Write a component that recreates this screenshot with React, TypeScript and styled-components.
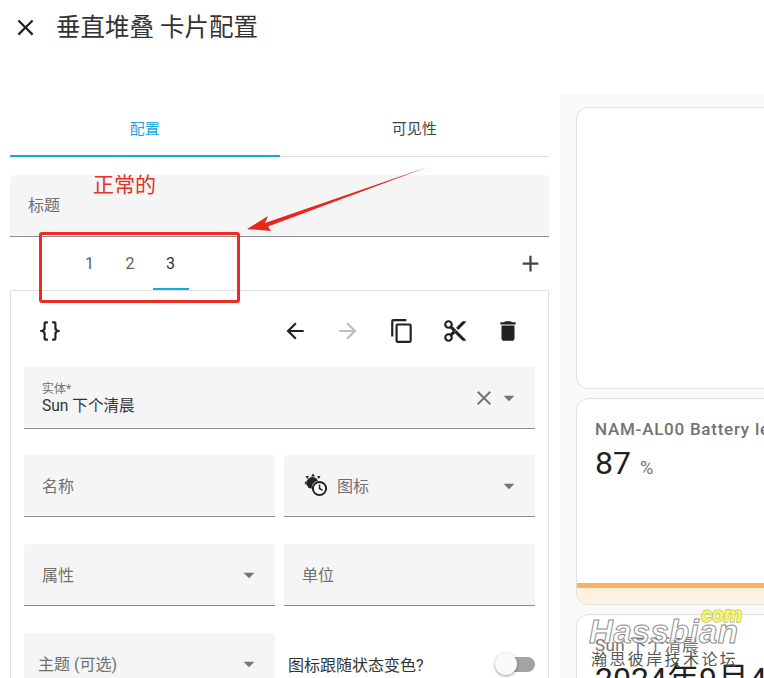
import React from 'react';
import styled, {createGlobalStyle} from 'styled-components';

const FONT = `Roboto, "Noto Sans CJK SC", sans-serif`;

const GlobalStyle = createGlobalStyle`
  html, body {
    margin: 0;
    padding: 0;
    background: #fff;
    font-family: ${FONT};
  }
  * {
    box-sizing: border-box;
  }
`;

const paths = {
  close:
    'M19,6.41L17.59,5L12,10.59L6.41,5L5,6.41L10.59,12L5,17.59L6.41,19L12,13.41L17.59,19L19,17.59L13.41,12L19,6.41Z',
  plus: 'M19,13H13V19H11V13H5V11H11V5H13V11H19V13Z',
  braces:
    'M8,3A2,2 0 0,0 6,5V9A2,2 0 0,1 4,11H3V13H4A2,2 0 0,1 6,15V19A2,2 0 0,0 8,21H10V19H8V14A2,2 0 0,0 6,12A2,2 0 0,0 8,10V5H10V3M16,3A2,2 0 0,1 18,5V9A2,2 0 0,0 20,11H21V13H20A2,2 0 0,0 18,15V19A2,2 0 0,1 16,21H14V19H16V14A2,2 0 0,1 18,12A2,2 0 0,1 16,10V5H14V3H16Z',
  left: 'M20,11V13H8L13.5,18.5L12.08,19.92L4.16,12L12.08,4.08L13.5,5.5L8,11H20Z',
  right:
    'M4,11V13H16L10.5,18.5L11.92,19.92L19.84,12L11.92,4.08L10.5,5.5L16,11H4Z',
  copy: 'M19,21H8V7H19M19,5H8A2,2 0 0,0 6,7V21A2,2 0 0,0 8,23H19A2,2 0 0,0 21,21V7A2,2 0 0,0 19,5M16,1H4A2,2 0 0,0 2,3V17H4V3H16V1Z',
  cut: 'M19,3L13,9L15,11L22,4V3M12,12.5A0.5,0.5 0 0,1 11.5,12A0.5,0.5 0 0,1 12,11.5A0.5,0.5 0 0,1 12.5,12A0.5,0.5 0 0,1 12,12.5M6,20A2,2 0 0,1 4,18C4,16.89 4.9,16 6,16A2,2 0 0,1 8,18C8,19.11 7.1,20 6,20M6,8A2,2 0 0,1 4,6C4,4.89 4.9,4 6,4A2,2 0 0,1 8,6C8,7.11 7.1,8 6,8M9.64,7.64C9.87,7.14 10,6.59 10,6A4,4 0 0,0 6,2A4,4 0 0,0 2,6A4,4 0 0,0 6,10C6.59,10 7.14,9.87 7.64,9.64L10,12L7.64,14.36C7.14,14.13 6.59,14 6,14A4,4 0 0,0 2,18A4,4 0 0,0 6,22A4,4 0 0,0 10,18C10,17.41 9.87,16.86 9.64,16.36L12,14L19,21H22V20L9.64,7.64Z',
  trash: 'M19,4H15.5L14.5,3H9.5L8.5,4H5V6H19M6,19A2,2 0 0,0 8,21H16A2,2 0 0,0 18,19V7H6V19Z',
  menuDown: 'M7,10L12,15L17,10H7Z',
};

const Icon: React.FC<{d: string; size?: number; color?: string}> = ({
  d,
  size = 26,
  color = '#212121',
}) => (
  <svg width={size} height={size} viewBox="0 0 24 24" fill={color}>
    <path d={d} />
  </svg>
);

const SunClock = () => (
  <svg width={24} height={24} viewBox="0 0 24 24" fill="#212121">
    <path d="M9,0.5L11,3.5H7Z M1.5,3L5,3.2L3.2,6Z M16.5,3L13,3.2L14.8,6Z M0.5,10L2.5,7.5V12.5Z" />
    <circle cx="8.5" cy="10" r="6" />
    <circle cx="15.5" cy="15.5" r="8" fill="#fff" />
    <circle cx="15.5" cy="15.5" r="6.6" fill="none" stroke="#212121" strokeWidth="2" />
    <path d="M14.8,11.5H16.3V15.1L19,16.7L18.3,17.9L14.8,15.9Z" />
  </svg>
);

const Page = styled.div`
  position: relative;
  width: 764px;
  height: 678px;
  overflow: hidden;
  background: #fff;
`;

const Header = styled.header`
  display: flex;
  align-items: center;
  height: 55px;
  margin-bottom: 39px;
  padding-left: 12px;
  gap: 17px;
`;

const Title = styled.h1`
  margin: 0;
  padding-top: 1px;
  font-size: 24.5px;
  font-weight: 400;
  line-height: 34px;
  color: #333;
`;

const Body = styled.div`
  display: flex;
  height: 584px;
`;

const Editor = styled.section`
  width: 560px;
  flex: none;
  padding: 8px 11px 0 10px;
`;

const Tabs = styled.div`
  display: flex;
  height: 55px;
  border-bottom: 1px solid #e0e0e0;
`;

const Tab = styled.div<{$active?: boolean}>`
  flex: 1;
  display: flex;
  align-items: center;
  justify-content: center;
  padding-bottom: 2px;
  margin-bottom: -1px;
  font-size: 15px;
  color: ${(p) => (p.$active ? '#18a6df' : '#444')};
  border-bottom: 2px solid ${(p) => (p.$active ? '#18a6df' : 'transparent')};
`;

const Field = styled.div<{$small?: boolean}>`
  position: relative;
  display: flex;
  align-items: center;
  height: 62px;
  padding: 0 15px 2px ${(p) => (p.$small ? '14px' : '18px')};
  background: #f5f5f5;
  border-bottom: 1px solid #8c8c8c;
  border-radius: 4px 4px 0 0;
  font-size: 16px;
  color: #6f6f6f;
`;

const FieldText = styled.span`
  flex: 1;
`;

const TitleField = styled(Field)`
  margin-top: 18px;
  padding-bottom: 3px;
`;

const PagerRow = styled.div`
  display: flex;
  align-items: stretch;
  justify-content: space-between;
  height: 53px;
  padding: 0 5px 0 61.5px;
`;

const Pager = styled.div`
  display: flex;
`;

const PageTab = styled.div<{$active?: boolean}>`
  display: flex;
  align-items: center;
  justify-content: center;
  width: 36px;
  margin-right: 4.5px;
  padding-top: 2px;
  font-size: 16px;
  color: ${(p) => (p.$active ? '#333' : '#5f5f5f')};
  border-bottom: 2px solid ${(p) => (p.$active ? '#18a6df' : 'transparent')};
`;

const AddButton = styled.div`
  display: flex;
  align-items: center;
`;

const Panel = styled.div`
  height: 420px;
  padding: 0 13px;
  border: 1px solid #e0e0e0;
  border-bottom: none;
`;

const Toolbar = styled.div`
  display: flex;
  align-items: center;
  height: 76px;
  padding-top: 4px;
  padding-left: 13px;
`;

const ToolSpacer = styled.div`
  flex: 1;
`;

const ToolIcons = styled.div`
  display: flex;
  gap: 27.25px;
  padding-right: 14px;
`;

const EntityField = styled(Field)`
  margin-bottom: 26px;
`;

const EntityText = styled.div`
  flex: 1;
  display: flex;
  flex-direction: column;
  padding-top: 4px;
`;

const FloatLabel = styled.span`
  font-size: 12px;
  line-height: 14px;
  color: #6f6f6f;
`;

const EntityValue = styled.span`
  font-size: 15.6px;
  line-height: 20px;
  color: #333;
`;

const FieldIcons = styled.div`
  display: flex;
  align-items: center;
  gap: 0;
  margin-right: -2px;
  padding-top: 2px;
  color: #757575;
`;

const FieldGrid = styled.div`
  display: grid;
  grid-template-columns: 251px 251px;
  column-gap: 9px;
  row-gap: 27px;
`;

const IconSlot = styled.span`
  display: flex;
  margin-right: 9px;
  margin-left: 2px;
`;

const SwitchRow = styled.div`
  display: flex;
  align-items: center;
  justify-content: space-between;
  height: 62px;
  padding: 0 0 0 4px;
  font-size: 16px;
  color: #333;
`;

const SwitchTrack = styled.div`
  position: relative;
  width: 37px;
  height: 15px;
  border-radius: 8px;
  background: #a3a3a3;
`;

const SwitchThumb = styled.div`
  position: absolute;
  left: -3px;
  top: -4px;
  width: 22px;
  height: 22px;
  border-radius: 50%;
  background: #fafafa;
  box-shadow: 0 1px 3px rgba(0, 0, 0, 0.4);
`;

const Preview = styled.aside`
  flex: 1;
  min-width: 0;
  display: flex;
  flex-direction: column;
  gap: 9.5px;
  padding: 13px 0 0 16px;
  overflow: hidden;
  background: #fafafa;
`;

const Card = styled.div<{$height: number}>`
  position: relative;
  flex: none;
  width: 260px;
  height: ${(p) => p.$height}px;
  overflow: hidden;
  background: #fff;
  border: 1px solid #e0e0e0;
  border-radius: 12px;
`;

const CardBody = styled.div`
  padding: 20px 18px 0;
`;

const CardName = styled.div<{$plain?: boolean}>`
  font-size: 17px;
  line-height: 21px;
  font-weight: ${(p) => (p.$plain ? 400 : 500)};
  letter-spacing: ${(p) => (p.$plain ? '0.4px' : '0.75px')};
  color: #727272;
  white-space: nowrap;
`;

const CardValue = styled.div`
  display: flex;
  align-items: baseline;
  gap: 9px;
  margin-top: 3px;
  font-size: 32px;
  line-height: 40px;
  color: #212121;
  white-space: nowrap;
`;

const CardUnit = styled.span`
  font-size: 18px;
  color: #727272;
`;

const Gauge = styled.div`
  position: absolute;
  left: 0;
  right: 0;
  bottom: 0;
  height: 21px;
  background: #fdf1e0;
  border-top: 5px solid #fbb45c;
`;

const Callout = styled.div`
  position: absolute;
  left: 93px;
  top: 171px;
  font-size: 21px;
  line-height: 28px;
  color: #e5332a;
`;

const Highlight = styled.div`
  position: absolute;
  left: 39px;
  top: 232px;
  width: 201px;
  height: 71px;
  border: 3px solid #ec2c22;
  border-radius: 3px;
`;

const ArrowMark = styled.svg`
  position: absolute;
  left: 240px;
  top: 160px;
`;

const Watermark = styled.div`
  position: absolute;
  left: 589px;
  top: 605px;
  width: 160px;
  pointer-events: none;
`;

const WatermarkCom = styled.div`
  position: absolute;
  left: 112px;
  top: -2px;
  font-size: 22px;
  line-height: 24px;
  font-weight: 900;
  font-style: italic;
  color: #f6f46c;
  -webkit-text-stroke: 1px #a8a650;
  paint-order: stroke fill;
`;

const WatermarkBrand = styled.div`
  position: absolute;
  left: 0;
  top: 9px;
  font-family: "Liberation Sans", sans-serif;
  font-size: 33px;
  line-height: 36px;
  font-weight: 700;
  font-style: italic;
  letter-spacing: 0.3px;
  color: rgba(255, 255, 255, 0.75);
  -webkit-text-stroke: 1px #8d8d8d;
`;

const WatermarkCaption = styled.div`
  position: absolute;
  left: 2px;
  top: 46px;
  font-size: 16px;
  line-height: 18px;
  letter-spacing: 2.4px;
  color: #555;
  white-space: nowrap;
`;

const MenuDown = () => <Icon d={paths.menuDown} color="#757575" />;

export default function App() {
  return (
    <Page>
      <GlobalStyle />
      <Header>
        <Icon d={paths.close} size={27} />
        <Title>垂直堆叠 卡片配置</Title>
      </Header>
      <Body>
        <Editor>
          <Tabs>
            <Tab $active>配置</Tab>
            <Tab>可见性</Tab>
          </Tabs>
          <TitleField>
            <FieldText>标题</FieldText>
          </TitleField>
          <PagerRow>
            <Pager>
              <PageTab>1</PageTab>
              <PageTab>2</PageTab>
              <PageTab $active>3</PageTab>
            </Pager>
            <AddButton>
              <Icon d={paths.plus} size={27} color="#444" />
            </AddButton>
          </PagerRow>
          <Panel>
            <Toolbar>
              <Icon d={paths.braces} />
              <ToolSpacer />
              <ToolIcons>
                <Icon d={paths.left} />
                <Icon d={paths.right} color="#bdbdbd" />
                <Icon d={paths.copy} />
                <Icon d={paths.cut} />
                <Icon d={paths.trash} />
              </ToolIcons>
            </Toolbar>
            <EntityField>
              <EntityText>
                <FloatLabel>实体*</FloatLabel>
                <EntityValue>Sun 下个清晨</EntityValue>
              </EntityText>
              <FieldIcons>
                <Icon d={paths.close} size={24} color="#757575" />
                <MenuDown />
              </FieldIcons>
            </EntityField>
            <FieldGrid>
              <Field>
                <FieldText>名称</FieldText>
              </Field>
              <Field>
                <IconSlot>
                  <SunClock />
                </IconSlot>
                <FieldText>图标</FieldText>
                <FieldIcons>
                  <MenuDown />
                </FieldIcons>
              </Field>
              <Field>
                <FieldText>属性</FieldText>
                <FieldIcons>
                  <MenuDown />
                </FieldIcons>
              </Field>
              <Field>
                <FieldText>单位</FieldText>
              </Field>
              <Field $small>
                <FieldText>主题 (可选)</FieldText>
                <FieldIcons>
                  <MenuDown />
                </FieldIcons>
              </Field>
              <SwitchRow>
                图标跟随状态变色?
                <SwitchTrack>
                  <SwitchThumb />
                </SwitchTrack>
              </SwitchRow>
            </FieldGrid>
          </Panel>
        </Editor>
        <Preview>
          <Card $height={281.5} />
          <Card $height={206.5}>
            <CardBody>
              <CardName>NAM-AL00 Battery level</CardName>
              <CardValue>
                87
                <CardUnit>%</CardUnit>
              </CardValue>
            </CardBody>
            <Gauge />
          </Card>
          <Card $height={120}>
            <CardBody>
              <CardName $plain>Sun 下个清晨</CardName>
              <CardValue>2024年9月4日</CardValue>
            </CardBody>
          </Card>
        </Preview>
      </Body>
      <Callout>正常的</Callout>
      <Highlight />
      <ArrowMark width={200} height={80} viewBox="0 0 200 80">
        <path
          d="M189,6.5 L25,63 L28,56 L7,69 L31,71 L28,66.5 Z"
          fill="#e8261c"
        />
      </ArrowMark>
      <Watermark>
        <WatermarkBrand>Hassbian</WatermarkBrand>
        <WatermarkCom>com</WatermarkCom>
        <WatermarkCaption>瀚思彼岸技术论坛</WatermarkCaption>
      </Watermark>
    </Page>
  );
}
